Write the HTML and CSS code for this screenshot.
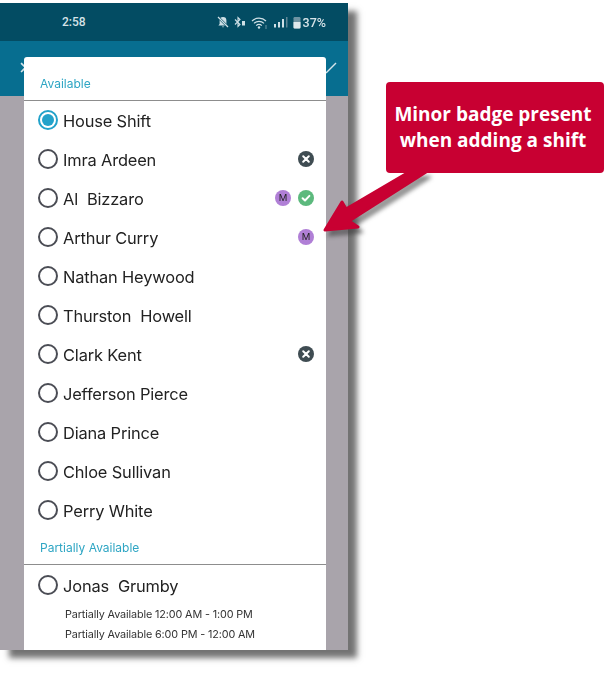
FILE: index.html
```html
<!DOCTYPE html>
<html lang="en">
<head>
<meta charset="utf-8">
<title>Minor badge</title>
<link rel="stylesheet" href="styles.css">
</head>
<body>
<main class="stage">
  <section class="phone">
    <header class="status">
      <span class="time">2:58</span>
      <span class="status-icons">
        <svg class="si" width="12" height="12" viewBox="0 0 12 12"><path d="M6 1a3.400 3.400 0 0 0-3.400 3.400V8L1.400 9.500h9.200L9.400 8V4.400A3.400 3.400 0 0 0 6 1z" fill="#cfe0e6"/><path d="M1 1l10 10" stroke="#034c63" stroke-width="2.400"/><path d="M1 1l10 10" stroke="#cfe0e6" stroke-width="1.200"/><path d="M4.800 10.400h2.400L6 11.600z" fill="#cfe0e6"/></svg>
        <svg class="si" width="12" height="12" viewBox="0 0 12 12"><path d="M1 3.500l5 5-2 2V1.500l2 2-5 5" fill="none" stroke="#cfe0e6" stroke-width="1.100"/><rect x="8" y="5" width="3" height="4.500" fill="#cfe0e6"/></svg>
        <svg class="si" width="17" height="13" viewBox="0 0 17 13"><path d="M1 5a10 10 0 0 1 14 0M3 7.400a7 7 0 0 1 10 0M5.200 9.600a3.800 3.800 0 0 1 5.600 0" fill="none" stroke="#cfe0e6" stroke-width="1.200"/><circle cx="8" cy="11.500" r="1.200" fill="#cfe0e6"/><path d="M15 9.500v1M15 11.500v1" stroke="#cfe0e6"/></svg>
        <svg class="si" width="15" height="12" viewBox="0 0 15 12"><rect x="1" y="8" width="2" height="3.500" fill="#cfe0e6"/><rect x="5" y="6" width="2" height="5.500" fill="#cfe0e6"/><rect x="9" y="3" width="2" height="8.500" fill="#cfe0e6"/><rect x="13" y="1" width="1.500" height="10.500" fill="#5d8596"/></svg>
        <svg class="si" width="8" height="13" viewBox="0 0 8 13"><rect x=".5" y="1" width="7" height="11.500" rx="1.200" fill="#6f93a2"/><path d="M.5 6h7v5.300a1.200 1.200 0 0 1-1.200 1.200H1.700a1.200 1.200 0 0 1-1.200-1.200z" fill="#dfe9ed"/></svg>
        <span class="pct">37%</span>
      </span>
    </header>
    <div class="appbar">
      <span class="appbar-x">×</span>
      <svg class="appbar-check" width="12" height="12" viewBox="0 0 12 12"><path d="M1 11L11 1" stroke="#d5e4ea" stroke-width="1.500"/></svg>
    </div>
    <div class="backdrop"></div>

    <div class="modal">
      <h2 class="group first">Available</h2>
      <ul class="list">
        <li class="row"><span class="radio on"></span><span class="name">House Shift</span></li>
        <li class="row"><span class="radio"></span><span class="name">Imra Ardeen</span>
          <span class="badges"><svg class="badge" viewBox="0 0 16 16"><circle cx="8" cy="8" r="8" fill="#3f4c52"/><path d="M5.200 5.200l5.600 5.600M10.800 5.200l-5.600 5.600" stroke="#fff" stroke-width="2" stroke-linecap="round"/></svg></span></li>
        <li class="row"><span class="radio"></span><span class="name">Al&nbsp; Bizzaro</span>
          <span class="badges"><span class="minor">M</span><svg class="badge" viewBox="0 0 16 16"><circle cx="8" cy="8" r="8" fill="#5cb97d"/><path d="M4.600 8.200l2.400 2.300 4.400-4.600" fill="none" stroke="#fff" stroke-width="2" stroke-linecap="round" stroke-linejoin="round"/></svg></span></li>
        <li class="row"><span class="radio"></span><span class="name">Arthur Curry</span>
          <span class="badges"><span class="minor">M</span></span></li>
        <li class="row"><span class="radio"></span><span class="name">Nathan Heywood</span></li>
        <li class="row"><span class="radio"></span><span class="name">Thurston&nbsp; Howell</span></li>
        <li class="row"><span class="radio"></span><span class="name">Clark Kent</span>
          <span class="badges"><svg class="badge" viewBox="0 0 16 16"><circle cx="8" cy="8" r="8" fill="#3f4c52"/><path d="M5.200 5.200l5.600 5.600M10.800 5.200l-5.600 5.600" stroke="#fff" stroke-width="2" stroke-linecap="round"/></svg></span></li>
        <li class="row"><span class="radio"></span><span class="name">Jefferson Pierce</span></li>
        <li class="row"><span class="radio"></span><span class="name">Diana Prince</span></li>
        <li class="row"><span class="radio"></span><span class="name">Chloe Sullivan</span></li>
        <li class="row"><span class="radio"></span><span class="name">Perry White</span></li>
      </ul>
      <h2 class="group">Partially Available</h2>
      <ul class="list partial">
        <li class="row"><span class="radio"></span><span class="name">Jonas&nbsp; Grumby</span></li>
      </ul>
      <p class="detail">Partially Available 12:00 AM - 1:00 PM</p>
      <p class="detail">Partially Available 6:00 PM - 12:00 AM</p>
    </div>
  </section>

  <svg class="arrow" width="605" height="260" viewBox="0 0 605 260">
    <path class="arrow-shadow" d="M409 172L346 209L342 202L325 230L358 227L349 221L426 172Z"/>
    <path class="arrow-body" d="M409 172L346 209L342 202L325 230L358 227L349 221L426 172Z"/>
  </svg>
  <aside class="callout">Minor badge present when adding a shift</aside>
</main>
</body>
</html>
```
FILE: styles.css
```css
* { box-sizing: border-box; }
html, body { margin: 0; padding: 0; background: #fff; }
body { width: 605px; height: 674px; overflow: hidden; font-family: Inter, "Liberation Sans", sans-serif; }

.stage { position: relative; width: 605px; height: 674px; padding-top: 3px; }

.phone {
  position: relative;
  width: 348px;
  height: 647px;
  display: flex;
  flex-direction: column;
  background: #a9a4ab;
  box-shadow: 9px 8px 6px rgba(40, 40, 40, .65);
  filter: blur(.3px);
}

.status {
  height: 38px;
  flex: none;
  background: #034c63;
  color: #d6e3e8;
  display: flex;
  align-items: center;
  justify-content: space-between;
  padding: 0 22px 0 62px;
  font-family: Roboto, sans-serif;
  font-size: 12px;
  font-weight: 500;
}
.status-icons { display: flex; align-items: center; gap: 5px; }
.si { display: block; }
.pct { font-size: 12.5px; margin-left: -3px; }

.appbar {
  height: 55px;
  flex: none;
  background: #076e90;
  position: relative;
}
.appbar-x {
  position: absolute; left: 19px; top: 15px;
  color: #d5e4ea; font-size: 22px; line-height: 24px; font-family: "Liberation Sans", sans-serif;
}
.appbar-check { position: absolute; right: 11px; top: 21px; }
.backdrop { flex: 1; }

.modal {
  position: absolute;
  left: 24px;
  top: 54px;
  width: 302px;
  height: 593px;
  background: #fff;
  border-radius: 3px 3px 0 0;
  overflow: hidden;
}

.group {
  margin: 0;
  height: 35px;
  padding: 1px 0 0 16px;
  display: flex;
  align-items: center;
  border-bottom: 1px solid #8d8d8d;
  color: #2fa6c4;
  font-size: 12px;
  font-weight: 400;
}
.group.first { height: 44px; padding-top: 10px; }

.list { list-style: none; margin: 0; padding: 0; }
.row {
  height: 39px;
  display: flex;
  align-items: center;
  padding: 0 12px 0 14px;
  color: #222;
  font-size: 16.4px;
}
.partial .row { margin-top: 1px; }

.radio {
  width: 20px; height: 20px;
  flex: none;
  border: 2px solid #4b4d55;
  border-radius: 50%;
  margin-right: 5px;
  position: relative;
  top: -1px;
}
.radio.on { border-color: #22a2ca; }
.radio.on::after {
  content: "";
  position: absolute;
  inset: 2px;
  border-radius: 50%;
  background: #22a2ca;
}

.name { flex: 1; white-space: nowrap; letter-spacing: -.15px; }

.badges { display: flex; align-items: center; gap: 7px; position: relative; top: -1px; }
.badge { width: 16px; height: 16px; display: block; }
.minor {
  width: 16px; height: 16px;
  border-radius: 50%;
  background: #b07fd6;
  color: #222;
  font-size: 9.5px;
  font-weight: 400;
  display: flex;
  align-items: center;
  justify-content: center;
}

.detail {
  margin: 0 0 0 41px;
  height: 20px;
  display: flex;
  align-items: center;
  font-size: 10.8px;
  color: #333;
  letter-spacing: -.12px;
}
.list + .detail { margin-top: -1px; }

.arrow { position: absolute; left: 0; top: 0; pointer-events: none; }
.arrow-shadow { fill: rgba(50, 50, 50, .45); stroke: rgba(50, 50, 50, .45); stroke-width: 3px; stroke-linejoin: round; transform: translate(4px, 5px); filter: blur(2px); }
.arrow-body { fill: #c80032; stroke: #c80032; stroke-width: 3px; stroke-linejoin: round; }

.callout {
  position: absolute;
  left: 386px;
  top: 82px;
  width: 218px;
  height: 91px;
  background: #c80032;
  border-radius: 4px;
  color: #fff;
  font-family: "Open Sans", sans-serif;
  font-weight: 700;
  font-size: 19px;
  line-height: 26px;
  text-align: center;
  padding: 19px 10px 0 6px;
}
```
